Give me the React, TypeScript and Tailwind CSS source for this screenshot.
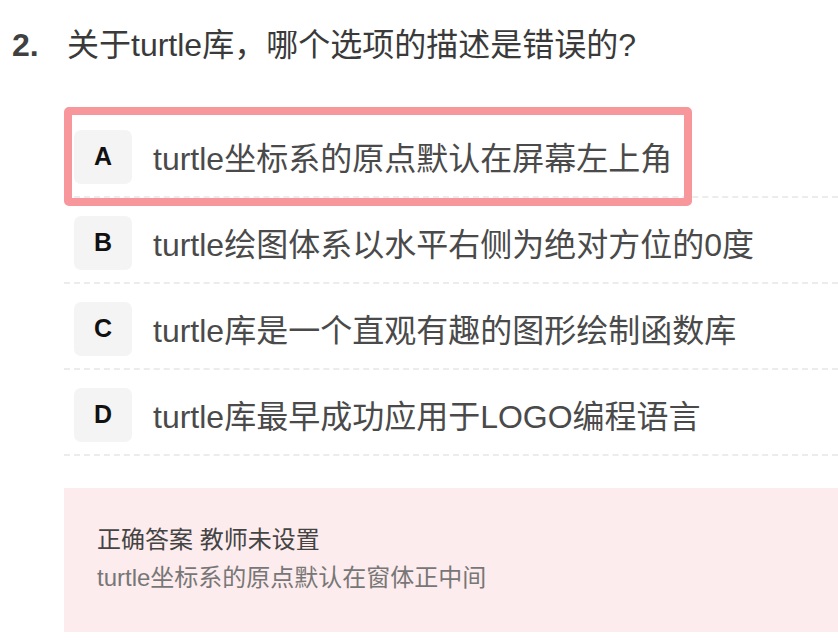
import React from "react";

const options = [
  { key: "A", text: "turtle坐标系的原点默认在屏幕左上角", selected: true },
  { key: "B", text: "turtle绘图体系以水平右侧为绝对方位的0度" },
  { key: "C", text: "turtle库是一个直观有趣的图形绘制函数库" },
  { key: "D", text: "turtle库最早成功应用于LOGO编程语言" },
];

export default function App() {
  return (
    <div
      className="w-[838px] h-[642px] bg-white overflow-hidden"
      style={{ fontFamily: '"Liberation Sans", "Noto Sans CJK SC", sans-serif' }}
    >
      <div className="flex items-center h-[44px] mt-[23px] pl-[12px]">
        <span className="text-[32px] font-bold text-[#404040] leading-[44px] w-[55px]">2.</span>
        <span className="text-[32px] text-[#3a3a3a] leading-[44px]">
          关于turtle库，哪个选项的描述是错误的?
        </span>
      </div>

      <div className="mt-[45px] pl-[64px]">
        {options.map((o) => (
          <div
            key={o.key}
            className="relative flex items-center h-[86px] pl-[10px] pt-[5px] border-b-2 border-dashed border-[#ececec]"
          >
            <div
              className="flex items-center justify-center w-[58px] h-[54px] rounded-[7px] bg-[#f4f4f4] font-bold text-[#111]"
              style={{ fontSize: "25px", lineHeight: "1" }}
            >
              {o.key}
            </div>
            <div className="ml-[21px] mt-[5px] text-[32px] text-[#4a4a4a] leading-[44px] whitespace-nowrap">
              {o.text}
            </div>
            {o.selected && (
              <div className="absolute left-0 top-[-5px] w-[628px] h-[99px] border-[8px] border-[#f7979c] rounded-[5px] pointer-events-none" />
            )}
          </div>
        ))}
      </div>

      <div className="ml-[64px] mt-[32px] h-[144px] bg-[#fdeced] px-[33px] pt-[33px]">
        <div className="text-[24px] leading-[38px] text-[#444]">正确答案 教师未设置</div>
        <div className="text-[24px] leading-[38px] text-[#777]">turtle坐标系的原点默认在窗体正中间</div>
      </div>
    </div>
  );
}
